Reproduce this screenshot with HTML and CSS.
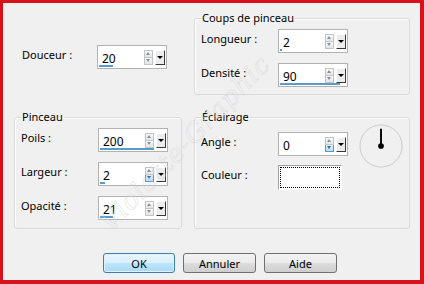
FILE: index.html
```html
<!DOCTYPE html>
<html>
<head lang="fr">
    <meta charset="UTF-8">
    <title>Pinceau</title>
<link rel="stylesheet" href="styles.css">
</head>
<body>
<div class="frame">
    <div class="panels">
        <div class="col">
            <div class="row first">
                <span class="lbl">Douceur :</span>
                <div class="spin"><span class="val">20</span><span class="bar" style="width:14px"></span><span class="arrows"><i class="up"></i><i class="down"></i></span><span class="drop"></span></div>
            </div>
        </div>
        <fieldset class="group">
            <legend>Coups de pinceau</legend>
            <div class="row">
                <span class="lbl">Longueur :</span>
                <div class="spin"><span class="val">2</span><span class="bar" style="width:2px"></span><span class="arrows"><i class="up"></i><i class="down"></i></span><span class="drop"></span></div>
            </div>
            <div class="row">
                <span class="lbl">Densité :</span>
                <div class="spin"><span class="val">90</span><span class="bar" style="width:60px"></span><span class="arrows"><i class="up"></i><i class="down"></i></span><span class="drop"></span></div>
            </div>
        </fieldset>
        <fieldset class="group">
            <legend>Pinceau</legend>
            <div class="row">
                <span class="lbl">Poils :</span>
                <div class="spin"><span class="val">200</span><span class="bar" style="width:54px"></span><span class="arrows"><i class="up"></i><i class="down"></i></span><span class="drop"></span></div>
            </div>
            <div class="row">
                <span class="lbl">Largeur :</span>
                <div class="spin"><span class="val">2</span><span class="bar" style="width:5px"></span><span class="arrows"><i class="up"></i><i class="down on"></i></span><span class="drop"></span></div>
            </div>
            <div class="row">
                <span class="lbl">Opacité :</span>
                <div class="spin"><span class="val">21</span><span class="bar" style="width:13px"></span><span class="arrows"><i class="up"></i><i class="down"></i></span><span class="drop"></span></div>
            </div>
        </fieldset>
        <fieldset class="group">
            <legend>Éclairage</legend>
            <div class="light">
                <div class="light-rows">
                    <div class="row">
                        <span class="lbl">Angle :</span>
                        <div class="spin"><span class="val">0</span><span class="arrows"><i class="up"></i><i class="down on"></i></span><span class="drop"></span></div>
                    </div>
                    <div class="row">
                        <span class="lbl">Couleur :</span>
                        <div class="swatch"><div class="swatch-in"></div></div>
                    </div>
                </div>
                <svg class="dial" width="46" height="46" viewBox="0 0 46 46">
                    <circle cx="23" cy="23" r="22" fill="none" stroke="#c9c9c9" stroke-width="1"/>
                    <line x1="23" y1="5" x2="23" y2="23" stroke="#000" stroke-width="2"/>
                    <circle cx="23" cy="23" r="3" fill="#000"/>
                </svg>
            </div>
        </fieldset>
    </div>
    <div class="buttons">
        <button class="btn default">OK</button>
        <button class="btn">Annuler</button>
        <button class="btn">Aide</button>
    </div>
    <div class="mark">Violette-Graphic</div>
</div>
</body>
</html>
```
FILE: styles.css
```css
body {
	margin: 0;
	font-family: "Noto Sans", "Open Sans", sans-serif;
	font-size: 11px;
	color: #000;
}
.frame {
	position: relative;
	width: 424px;
	height: 284px;
	box-sizing: border-box;
	border: solid #d8121a;
	border-width: 3px 4px 4px 3px;
	background-color: #f0f0f0;
	overflow: hidden;
}
.panels {
	display: grid;
	grid-template-columns: 168px 216px;
	grid-template-rows: 85px 120px;
	column-gap: 12px;
	row-gap: 14px;
	padding: 7px 0 0 11px;
}
.col {
	padding-left: 8px;
}
.group {
	margin: 0;
	padding: 0 6px 7px;
	border: 1px solid #dadada;
	border-radius: 3px;
	box-shadow: inset 1px 1px 0 #fff;
	min-width: 0;
}
.group legend {
	padding: 0 1px;
	line-height: 16px;
}
.row {
	display: flex;
	align-items: flex-start;
	margin-top: 3px;
}
.row + .row {
	margin-top: 10px;
}
.first {
	margin-top: 35px;
}
.lbl {
	width: 75px;
	padding-top: 2px;
	line-height: 16px;
	flex: none;
}
.group .lbl {
	width: 77px;
}
.spin {
	position: relative;
	display: flex;
	align-items: center;
	width: 70px;
	height: 24px;
	box-sizing: border-box;
	border: 1px solid #b2b2b2;
	background-color: #fff;
}
.val {
	flex: 1;
	padding: 2px 0 0 4px;
	font-size: 12px;
}
.bar {
	position: absolute;
	left: 1px;
	bottom: 1px;
	height: 2px;
	background-color: #5b9bcb;
}
.arrows {
	display: flex;
	flex-direction: column;
	width: 9px;
	height: 15px;
	margin-right: 2px;
}
.arrows i {
	flex: 1;
	position: relative;
	border: 1px solid #c4c4c4;
	background: linear-gradient(#fafafa, #e4e4e4);
}
.arrows i + i {
	border-top: none;
}
.arrows i::after {
	content: "";
	position: absolute;
	left: 1px;
	top: 1px;
	border-left: 2.5px solid transparent;
	border-right: 2.5px solid transparent;
}
.arrows .up::after {
	border-bottom: 3px solid #7b93ab;
}
.arrows .down::after {
	border-top: 3px solid #7b93ab;
}
.arrows .on {
	background: linear-gradient(#e4f3fb, #b8dcf2);
	border-color: #4b9ad0;
}
.arrows .on::after {
	border-top-color: #2b6ea4;
}
.drop {
	position: relative;
	width: 10px;
	height: 15px;
	margin-right: 1px;
	box-sizing: border-box;
	border: 1px solid;
	border-color: #fff #3a3a3a #3a3a3a #fff;
	background-color: #ececec;
}
.drop::after {
	content: "";
	position: absolute;
	left: 1px;
	top: 5px;
	border-left: 3px solid transparent;
	border-right: 3px solid transparent;
	border-top: 3px solid #000;
}
.light {
	display: flex;
	align-items: flex-start;
}
.light-rows {
	margin-top: 4px;
}
.light-rows .row + .row {
	margin-top: 9px;
}
.swatch {
	width: 64px;
	height: 25px;
	box-sizing: border-box;
	border: 1px solid;
	border-color: #a0a0a0 #fff #fff #a0a0a0;
	padding: 1px;
	background-color: #fff;
}
.swatch-in {
	height: 100%;
	box-sizing: border-box;
	border: 1px dotted #000;
}
.dial {
	margin: -2px 0 0 11px;
}
.buttons {
	display: flex;
	gap: 8px;
	padding: 24px 0 0 100px;
}
.btn {
	width: 73px;
	height: 20px;
	padding: 0;
	font-family: inherit;
	font-size: 11px;
	color: #000;
	border: 1px solid #707070;
	border-radius: 3px;
	background: linear-gradient(#f3f3f3 0, #ebebeb 50%, #dddddd 51%, #cfcfcf 100%);
}
.default {
	width: 72px;
	border-color: #3c7fb1;
	background: linear-gradient(#eaf6fd 0, #d9f0fc 50%, #bee6fd 51%, #a7d9f5 100%);
	box-shadow: inset 0 0 0 1px #dff1fb;
}
.mark {
	position: absolute;
	left: 182px;
	top: 140px;
	font-family: "DejaVu Serif", serif;
	font-style: italic;
	font-size: 26px;
	letter-spacing: 1px;
	color: transparent;
	-webkit-text-stroke: 0.4px #d6d6d6;
	transform: translate(-50%, -50%) rotate(-46deg);
	pointer-events: none;
	white-space: nowrap;
}
```
